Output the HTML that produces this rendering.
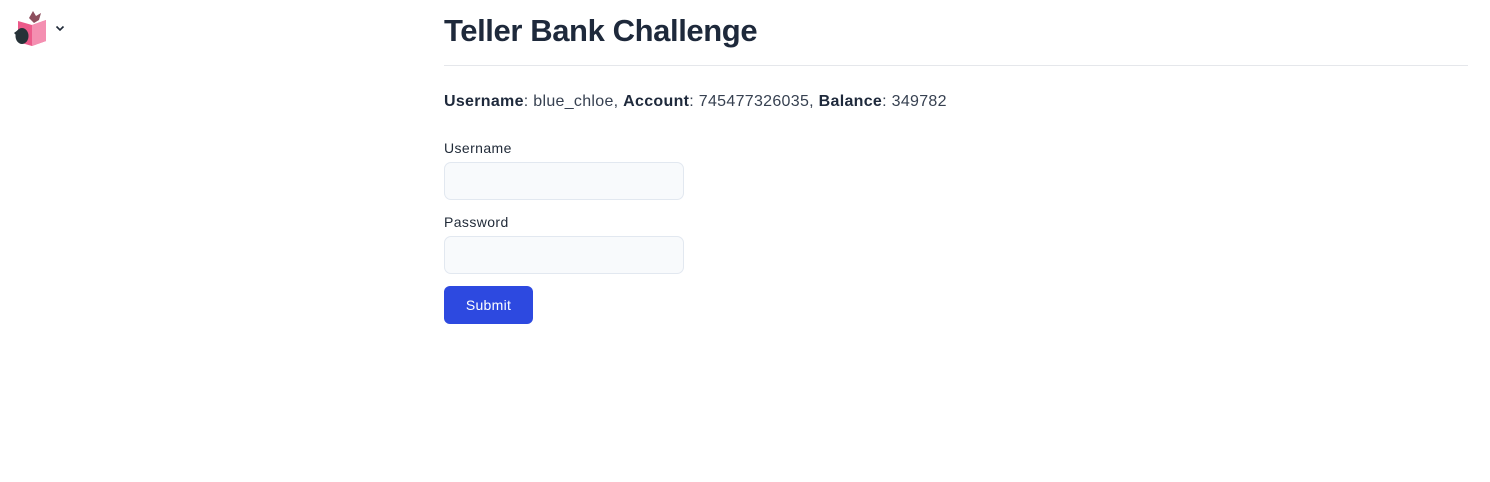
<!DOCTYPE html>
<html><head><meta charset="utf-8"><style>
body{margin:0;width:1490px;height:482px;background:#fff;font-family:"Liberation Sans",sans-serif;color:#1f2937;position:relative}
h1{position:absolute;left:444px;top:13px;margin:0;font-size:31px;font-weight:700;color:#1e293b;letter-spacing:-0.4px}
.hr{position:absolute;left:444px;top:65px;width:1024px;height:1px;background:#e5e7eb}
.info{position:absolute;left:444px;top:93px;font-size:16px;color:#374151;letter-spacing:0.3px}
.info b{color:#1e293b}
label{position:absolute;left:444px;font-size:14px;color:#1f2937;letter-spacing:0.4px}
.in{position:absolute;left:444px;width:238px;height:36px;border:1px solid #e2e8f0;border-radius:7px;background:#f8fafc}
.btn{position:absolute;left:444px;top:286px;width:89px;height:38px;border-radius:6px;background:#2d49e0;color:#fff;font-size:14px;text-align:center;line-height:38px;letter-spacing:0.3px}
</style></head><body>
<svg style="position:absolute;left:12px;top:9px" width="38" height="38" viewBox="0 0 38 38">
<path d="M6 12 L20 16 L34 11 L34 32 L20 37 L6 33 Z" fill="#ec5a8a"/>
<path d="M20 16 L34 11 L34 32 L20 37 Z" fill="#f48fb1"/>
<path d="M21 2 L24 7 L29 4 L27 11 L22 14 L17 9 Z" fill="#8d4e5d"/>
<ellipse cx="10" cy="27" rx="6.5" ry="8" fill="#263238"/>
<path d="M2 24 L6 21 L6 28 Z" fill="#263238"/>
</svg>
<svg style="position:absolute;left:55px;top:25px" width="10" height="7" viewBox="0 0 10 7"><path d="M1.5 1.5 L5 5 L8.5 1.5" fill="none" stroke="#1f2937" stroke-width="1.6"/></svg>
<h1>Teller Bank Challenge</h1>
<div class="hr"></div>
<div class="info"><b>Username</b>: blue_chloe, <b>Account</b>: 745477326035, <b>Balance</b>: 349782</div>
<label style="top:140px">Username</label>
<div class="in" style="top:162px"></div>
<label style="top:214px">Password</label>
<div class="in" style="top:236px"></div>
<div class="btn">Submit</div>
</body></html>
